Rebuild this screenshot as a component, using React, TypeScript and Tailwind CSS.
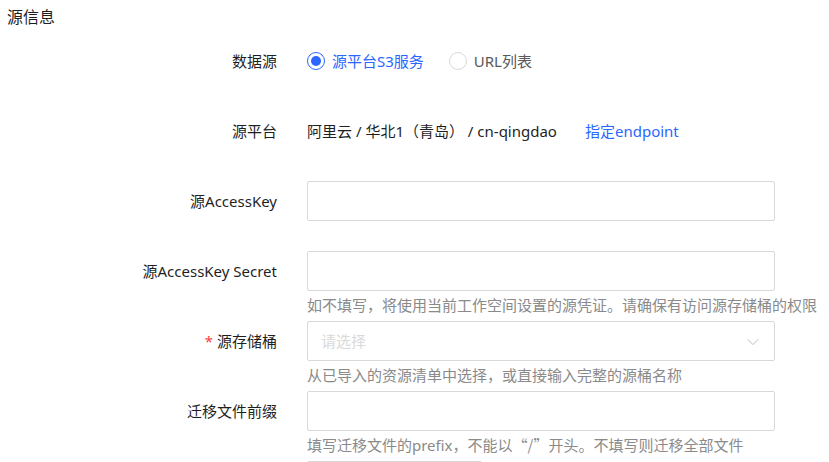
import type { ReactNode } from "react";

const box =
  "block h-10 w-full max-w-[468px] rounded-[2px] border border-[#d9d9d9] bg-white px-[13px] outline-none focus:border-[#2b66ff]";

type RowProps = {
  label?: string;
  htmlFor?: string;
  required?: boolean;
  hint?: ReactNode;
  children: ReactNode;
};

function Row({ label, htmlFor, required, hint, children }: RowProps) {
  return (
    <div className="flex gap-[30px]">
      <div className="w-[277px] shrink-0 text-right leading-10 text-[#1f1f1f]">
        {required && <span className="mr-1 text-[#ff3b3b]">*</span>}
        {label && (htmlFor ? <label htmlFor={htmlFor}>{label}</label> : <span>{label}</span>)}
      </div>
      <div className="min-w-0 flex-1">
        <div className="flex h-10 items-center">{children}</div>
        <p className="h-[30px] leading-7 whitespace-nowrap text-[#8a8a8a]">{hint}</p>
      </div>
    </div>
  );
}

function Radio({ label, checked }: { label: string; checked?: boolean }) {
  return (
    <label className="flex items-center gap-[7px] text-[#595959] has-checked:text-[#2b66ff]">
      <input
        type="radio"
        name="source"
        defaultChecked={checked}
        className="size-[18px] appearance-none rounded-full border border-[#d9d9d9] bg-white bg-clip-content p-[3px] checked:border-[#2b66ff] checked:bg-[#2b66ff]"
      />
      {label}
    </label>
  );
}

export default function App() {
  return (
    <main className="h-screen overflow-hidden bg-white font-['Noto_Sans','Noto_Sans_CJK_SC',sans-serif] text-[15px]">
      <h1 className="px-[7px] pt-[5px] pb-3 text-base leading-6 text-[#1f1f1f]">源信息</h1>
      <form>
        <Row label="数据源">
          <div className="flex gap-[25px]">
            <Radio label="源平台S3服务" checked />
            <Radio label="URL列表" />
          </div>
        </Row>
        <Row label="源平台">
          <div className="flex gap-7 whitespace-nowrap text-[#1f1f1f]">
            <span>阿里云 / 华北1（青岛） / cn-qingdao</span>
            <a href="#endpoint" className="text-[#2b66ff]">
              指定endpoint
            </a>
          </div>
        </Row>
        <Row label="源AccessKey" htmlFor="access-key">
          <input id="access-key" type="text" className={box} />
        </Row>
        <Row
          label="源AccessKey Secret"
          htmlFor="access-secret"
          hint="如不填写，将使用当前工作空间设置的源凭证。请确保有访问源存储桶的权限"
        >
          <input id="access-secret" type="password" className={box} />
        </Row>
        <Row
          label="源存储桶"
          htmlFor="bucket"
          required
          hint="从已导入的资源清单中选择，或直接输入完整的源桶名称"
        >
          <div className="relative w-full max-w-[468px]">
            <select id="bucket" defaultValue="" className={`${box} appearance-none text-[#d9d9d9]`}>
              <option value="">请选择</option>
            </select>
            <svg
              viewBox="0 0 12 8"
              className="pointer-events-none absolute top-[17px] right-4 h-2 w-3 fill-none stroke-[#bfbfbf]"
              aria-hidden="true"
            >
              <path d="M0.7 1.2 6 6.6 11.3 1.2" />
            </svg>
          </div>
        </Row>
        <Row
          label="迁移文件前缀"
          htmlFor="prefix"
          hint={
            <>
              填写迁移文件的prefix，不能以
              <span className="font-['Noto_Sans_CJK_SC',sans-serif]">“/”</span>
              开头。不填写则迁移全部文件
            </>
          }
        >
          <input id="prefix" type="text" className={box} />
        </Row>
        <Row>
          <div className="w-[175px]">
            <input type="text" aria-label="其他" className={box} />
          </div>
        </Row>
      </form>
    </main>
  );
}
